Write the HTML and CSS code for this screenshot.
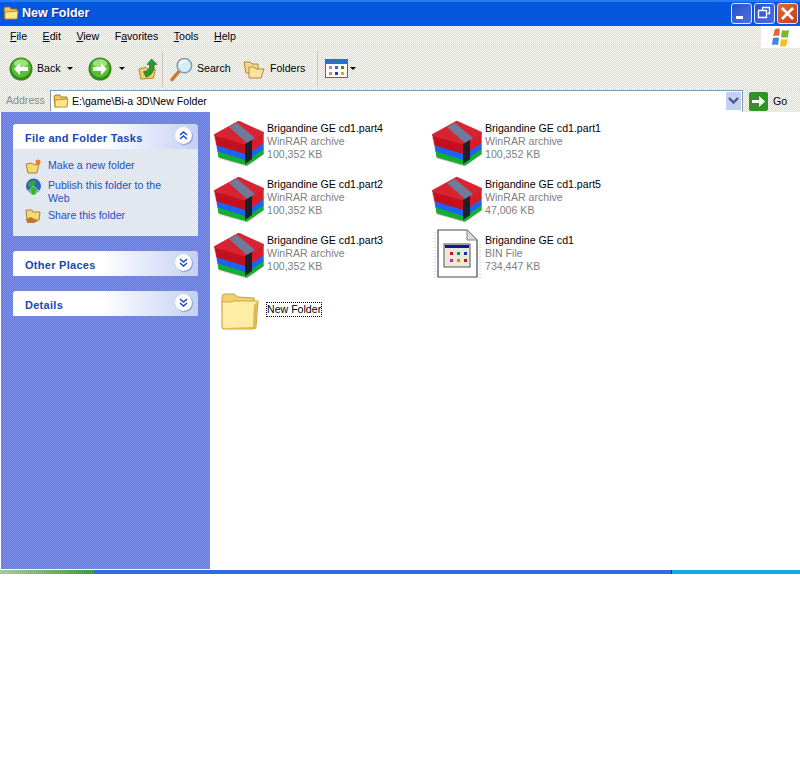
FILE: index.html
```html
<!DOCTYPE html>
<html lang="en">
<head>
<meta charset="utf-8">
<title>New Folder</title>
<link rel="stylesheet" href="styles.css">
</head>
<body>
<svg class="defs" width="0" height="0" aria-hidden="true">
  <defs>
    <symbol id="rar" viewBox="0 0 50 48">
      <path d="M0 15 L24 1 L50 12 L50 34 L33 46 L5 38 Z" fill="#e8b8bc" stroke="#d8a0a8" stroke-width="1" stroke-dasharray="1 1"/>
      <path d="M4 30 L33 39 L49 28 L49 34 L33 45 L5 37 Z" fill="#10b030" stroke="#10b030" stroke-linejoin="round"/>
      <path d="M3 24 L33 33 L49 22 L49 29 L33 40 L4 31 Z" fill="#1e62f2" stroke="#1e62f2" stroke-linejoin="round"/>
      <path d="M1 15 L33 24 L33 34 L3 25 Z" fill="#c4101e" stroke="#c4101e" stroke-linejoin="round"/>
      <path d="M33 24 L49 13 L49 23 L33 34 Z" fill="#d81c28" stroke="#d81c28" stroke-linejoin="round"/>
      <path d="M1 15 L25 2 L49 13 L33 24 Z" fill="#d82432" stroke="#d82432" stroke-width="2" stroke-linejoin="round"/>
      <path d="M15 7 L23 3 L41 18 L33 23 Z" fill="#6e7c9c"/>
      <path d="M31 24 L38 20 L38 39 L31 44 Z" fill="#1e2028"/>
    </symbol>
    <symbol id="bigfolder" viewBox="0 0 48 48">
      <path d="M7 9 Q7 6 10 6 L19 6 L23 9 L39 10 L40 35 L8 40 Z" fill="#f0d070" stroke="#c8a040"/>
      <path d="M7 14 L15 14 L18 13 L43 13 L41 38 Q41 41 38 41 L10 41 Q7 41 7 38 Z" fill="#feeda4" stroke="#d0a840" stroke-width="1.200"/>
      <path d="M11 40 L38 39 L39 17 L42 14 L41 39 Q40 41 38 41 L11 41 Z" fill="#e0b850"/>
    </symbol>
    <symbol id="tinyfolder" viewBox="0 0 16 16">
      <path d="M1 4 Q1 2 3 2 L7 2 L8 4 L14 4 L14 13 L2 14 Z" fill="#f0c656" stroke="#9a7418" stroke-width=".9"/>
      <path d="M2 7 L15 6 L14 14 L2 14 Z" fill="#fde68c" stroke="#b88c24" stroke-width=".9"/>
    </symbol>
    <symbol id="green" viewBox="0 0 24 24">
      <circle cx="12" cy="12" r="11.500" fill="#2e8f1c"/>
      <circle cx="12" cy="11" r="9.500" fill="#5cbc34"/>
      <ellipse cx="12" cy="6.500" rx="7" ry="4" fill="#a0e080"/>
    </symbol>
  </defs>
</svg>

<div class="window">
  <header class="titlebar">
    <svg class="title-icon" width="18" height="16"><use href="#tinyfolder"/></svg>
    <span class="title-text">New Folder</span>
    <div class="win-buttons">
      <div class="win-btn"><svg width="21" height="21" viewBox="0 0 21 21"><rect x="5" y="13" width="7" height="3" fill="#fff"/></svg></div>
      <div class="win-btn"><svg width="21" height="21" viewBox="0 0 21 21"><path d="M8.500 7.500V4.500H15.500V10.500H13.500M4.500 7.500H12.500V14.500H4.500Z" fill="none" stroke="#fff" stroke-width="1.300"/></svg></div>
      <div class="win-btn win-close"><svg width="21" height="21" viewBox="0 0 21 21"><path d="M5 5L16 16M16 5L5 16" stroke="#fff" stroke-width="2.600"/></svg></div>
    </div>
  </header>

  <nav class="menubar">
    <span class="menu-item"><u>F</u>ile</span>
    <span class="menu-item"><u>E</u>dit</span>
    <span class="menu-item"><u>V</u>iew</span>
    <span class="menu-item">F<u>a</u>vorites</span>
    <span class="menu-item"><u>T</u>ools</span>
    <span class="menu-item"><u>H</u>elp</span>
    <div class="flag">
      <svg width="20" height="20" viewBox="0 0 20 20">
        <path d="M4 2 Q7 1 9 2 L8 9 Q6 8 2 9 Z" fill="#e8662c"/>
        <path d="M11 3 Q14 4 18 3 L17 10 Q13 11 10 10 Z" fill="#7cb82e"/>
        <path d="M2 11 Q6 10 8 11 L7 18 Q4 17 1 18 Z" fill="#3c86dc"/>
        <path d="M10 12 Q13 13 17 12 L15 19 Q12 20 9 19 Z" fill="#f4c01c"/>
      </svg>
    </div>
  </nav>

  <div class="toolbar">
    <div class="tool">
      <svg width="24" height="24"><use href="#green"/><path d="M5 12L11 6V10H19V14H11V18Z" fill="#fff"/></svg>
      <span class="tool-label label-back">Back</span>
      <span class="caret caret-back"></span>
    </div>
    <div class="tool tool-fwd">
      <svg width="24" height="24"><use href="#green"/><path d="M19 12L13 6V10H5V14H13V18Z" fill="#fff"/></svg>
      <span class="caret caret-fwd"></span>
    </div>
    <svg class="up-icon" width="20" height="24" viewBox="0 0 22 24">
      <path d="M1 12L9 10L12 13L19 12L17 22L3 23Z" fill="#f3cf6b" stroke="#a87f22"/>
      <path d="M6 15Q13 14 13 7H10L15 1L21 7H18Q18 18 9 21Z" fill="#2b9a2a" stroke="#176c18" stroke-width=".7"/>
    </svg>
    <span class="sep"></span>
    <div class="tool tool-search">
      <svg width="25" height="26" viewBox="0 0 26 26">
        <path d="M3 24L11 15" stroke="#c9792c" stroke-width="3.400" stroke-linecap="round"/>
        <circle cx="16" cy="9.500" r="7.500" fill="#d6eefa" stroke="#7f9bb8" stroke-width="1.600"/>
        <path d="M11 8Q13 4.500 18 4.500" stroke="#fff" stroke-width="2" fill="none"/>
      </svg>
      <span class="tool-label label-search">Search</span>
    </div>
    <div class="tool tool-folders">
      <svg width="23" height="20" viewBox="0 0 23 20">
        <path d="M1 3H7L9 5H15V14H3Z" fill="#f3d98a" stroke="#b18a30"/>
        <path d="M6 8H11L13 10H21L18 19H6Z" fill="#fbe49a" stroke="#b18a30"/>
      </svg>
      <span class="tool-label label-folders">Folders</span>
    </div>
    <span class="sep sep-views"></span>
    <div class="tool">
      <svg width="23" height="20" viewBox="0 0 23 20">
        <rect x=".5" y=".5" width="22" height="18" fill="#fff" stroke="#2a70c8"/>
        <rect x="1" y="1" width="21" height="4" fill="#2a70c8"/>
        <rect x="4" y="7" width="3" height="3" fill="#8a94d8"/><rect x="10" y="7" width="3" height="3" fill="#3d62c2"/><rect x="16" y="7" width="3" height="3" fill="#1c9a40"/>
        <rect x="4" y="13" width="3" height="3" fill="#e8824a"/><rect x="10" y="13" width="3" height="3" fill="#1d4aa8"/><rect x="16" y="13" width="3" height="3" fill="#e0a62c"/>
      </svg>
      <span class="caret caret-views"></span>
    </div>
  </div>

  <div class="addressbar">
    <span class="address-label">Address</span>
    <div class="address-field">
      <svg width="16" height="16"><use href="#tinyfolder"/></svg>
      <span class="address-text">E:\game\Bi-a 3D\New Folder</span>
      <span class="address-drop"><svg width="11" height="8" viewBox="0 0 11 8"><path d="M1 1L5.500 5.500L10 1" fill="none" stroke="#4d5a80" stroke-width="2.400"/></svg></span>
    </div>
    <div class="go">
      <svg width="19" height="19" viewBox="0 0 19 19">
        <rect width="19" height="19" rx="2" fill="#2f9425"/>
        <path d="M3 8H10V4L16 9.500L10 15V11H3Z" fill="#fff"/>
      </svg>
      <span class="go-label">Go</span>
    </div>
  </div>

  <main class="content">
    <aside class="sidebar">
      <section class="panel">
        <div class="panel-head">
          <span>File and Folder Tasks</span>
          <span class="chev"><svg width="11" height="11" viewBox="0 0 11 11"><path d="M2 5L5.500 2L9 5M2 9L5.500 6L9 9" fill="none" stroke="#1f46b8" stroke-width="1.500"/></svg></span>
        </div>
        <div class="panel-body">
          <a class="task">
            <svg width="17" height="16" viewBox="0 0 17 16"><path d="M1 6L7 5L9 7L14 6L12 15H3Z" fill="#f6d878" stroke="#a58232"/><circle cx="13" cy="4" r="2.500" fill="#ef7c2a"/></svg>
            <span>Make a new folder</span>
          </a>
          <a class="task">
            <svg width="17" height="18" viewBox="0 0 17 18"><circle cx="8.500" cy="8" r="7.500" fill="#2d62c8"/><path d="M3 5Q8 1 11 3L9 9L4 9Z" fill="#3aa23a"/><path d="M8.500 8L14 13H11V17H6V13H3Z" fill="#2fb52a" stroke="#fff" stroke-width=".5"/></svg>
            <span>Publish this folder to the Web</span>
          </a>
          <a class="task">
            <svg width="17" height="16" viewBox="0 0 17 16"><path d="M1 2H7L8 4H15L14 12H2Z" fill="#f6d878" stroke="#a58232"/><path d="M1 11L6 9L13 13L9 15H2Z" fill="#c4762c"/></svg>
            <span>Share this folder</span>
          </a>
        </div>
      </section>
      <section class="panel">
        <div class="panel-head">
          <span>Other Places</span>
          <span class="chev"><svg width="11" height="11" viewBox="0 0 11 11"><path d="M2 2L5.500 5L9 2M2 6L5.500 9L9 6" fill="none" stroke="#1f46b8" stroke-width="1.500"/></svg></span>
        </div>
      </section>
      <section class="panel">
        <div class="panel-head">
          <span>Details</span>
          <span class="chev"><svg width="11" height="11" viewBox="0 0 11 11"><path d="M2 2L5.500 5L9 2M2 6L5.500 9L9 6" fill="none" stroke="#1f46b8" stroke-width="1.500"/></svg></span>
        </div>
      </section>
    </aside>

    <section class="files">
      <div class="file">
        <svg class="file-icon" width="50" height="48"><use href="#rar"/></svg>
        <div class="file-text"><span class="file-name">Brigandine GE cd1.part4</span><span class="file-meta">WinRAR archive</span><span class="file-meta">100,352 KB</span></div>
      </div>
      <div class="file">
        <svg class="file-icon" width="50" height="48"><use href="#rar"/></svg>
        <div class="file-text"><span class="file-name">Brigandine GE cd1.part1</span><span class="file-meta">WinRAR archive</span><span class="file-meta">100,352 KB</span></div>
      </div>
      <div class="file">
        <svg class="file-icon" width="50" height="48"><use href="#rar"/></svg>
        <div class="file-text"><span class="file-name">Brigandine GE cd1.part2</span><span class="file-meta">WinRAR archive</span><span class="file-meta">100,352 KB</span></div>
      </div>
      <div class="file">
        <svg class="file-icon" width="50" height="48"><use href="#rar"/></svg>
        <div class="file-text"><span class="file-name">Brigandine GE cd1.part5</span><span class="file-meta">WinRAR archive</span><span class="file-meta">47,006 KB</span></div>
      </div>
      <div class="file">
        <svg class="file-icon" width="50" height="48"><use href="#rar"/></svg>
        <div class="file-text"><span class="file-name">Brigandine GE cd1.part3</span><span class="file-meta">WinRAR archive</span><span class="file-meta">100,352 KB</span></div>
      </div>
      <div class="file">
        <svg class="file-icon icon-bin" width="50" height="48" viewBox="0 0 50 48">
          <path d="M3 0V46M48 12V46" stroke="#b8b8b8" stroke-dasharray="1 2"/>
          <path d="M6 -2H35L45 8V45H6Z" fill="#fff" stroke="#44484c" stroke-width="1.200"/>
          <path d="M35 -2V8H45Z" fill="#dcdcd4" stroke="#80848a"/>
          <rect x="12" y="12" width="26" height="23" fill="#ece8d8" stroke="#505458"/>
          <rect x="13" y="13" width="24" height="3" fill="#101a8c"/>
          <rect x="18" y="20" width="3" height="3" fill="#c8102a"/><rect x="25" y="20" width="3" height="3" fill="#10908c"/><rect x="32" y="20" width="3" height="3" fill="#1030b8"/>
          <rect x="18" y="27" width="3" height="3" fill="#c02aa8"/><rect x="25" y="27" width="3" height="3" fill="#a89a14"/><rect x="32" y="27" width="3" height="3" fill="#c8102a"/>
        </svg>
        <div class="file-text"><span class="file-name">Brigandine GE cd1</span><span class="file-meta">BIN File</span><span class="file-meta">734,447 KB</span></div>
      </div>
      <div class="file">
        <svg class="file-icon" width="50" height="48"><use href="#bigfolder"/></svg>
        <div class="file-text file-text-folder"><span class="file-name file-selected">New Folder</span></div>
      </div>
    </section>
  </main>

  <footer class="taskbar">
    <span class="task-start"></span>
    <span class="task-mid"></span>
    <span class="task-tray"></span>
  </footer>
</div>
</body>
</html>
```

FILE: styles.css
```css
* { box-sizing: border-box; }
html, body { margin: 0; padding: 0; background: #fff; }
body { font: 10.6px/13px "Liberation Sans", Arial, sans-serif; color: #000; }
.defs { position: absolute; }
.window { width: 800px; height: 574px; display: flex; flex-direction: column; overflow: hidden; }

.titlebar {
  height: 26px; display: flex; align-items: center; padding-left: 2px;
  background: repeating-conic-gradient(#0a4cd4 0 25%, #0a5ce6 0 50%) 0 0 / 2px 2px;
  box-shadow: inset 0 -2px 0 #0058f0, inset 0 2px 0 #2a7cf0;
}
.title-icon { margin-right: 2px; flex: none; }
.title-text { color: #fff; font-size: 12.5px; font-weight: 700; text-shadow: 1px 1px #0a2a90; }
.win-buttons { margin-left: auto; display: flex; gap: 2px; padding-right: 2px; }
.win-btn {
  width: 21px; height: 21px; border: 1px solid #dfe8ff; border-radius: 3px;
  background: linear-gradient(135deg, #2a50c8, #4a70e0); display: flex; align-items: center; justify-content: center;
}
.win-btn svg { margin: -1px; flex: none; }
.win-close { background: linear-gradient(135deg, #e06a3c, #c83c18); }

.menubar, .toolbar, .addressbar {
  background: repeating-conic-gradient(#e6d9c0 0 25%, #fdfbf6 0 50%) 0 0 / 2px 2px;
}
.menubar {
  height: 22px; display: flex; align-items: center; gap: 15.500px; padding-left: 10px;
  border-bottom: 1px solid #efe4d6;
}
.flag {
  margin-left: auto; width: 39px; height: 22px; background: #fff; flex: none;
  display: flex; align-items: center; justify-content: center;
}
.toolbar {
  height: 42px; display: flex; align-items: center; padding-left: 9px;
  border-bottom: 1px solid #efe4d6;
}
.tool { display: flex; align-items: center; }
.tool-label { margin-left: 4px; }
.label-back { width: 24px; }
.label-search { width: 36px; margin-left: 3px; }
.label-folders { width: 38px; }
.caret { display: inline-block; border-left: 3px solid transparent; border-right: 3px solid transparent; border-top: 3px solid #000; }
.caret-back { margin-left: 6px; }
.tool-fwd { margin-left: 15px; }
.caret-fwd { margin-left: 7px; }
.up-icon { margin-left: 13px; flex: none; }
.sep { width: 1px; height: 36px; background: #cfc9b8; margin: 0 6px 0 4px; flex: none; }
.tool-folders { margin-left: 10px; }
.sep-views { margin: 0 7px 0 9px; }
.caret-views { margin-left: 2px; }

.addressbar { height: 22px; display: flex; align-items: stretch; }
.address-label { width: 50px; padding: 4px 0 0 6px; color: #8a8a80; }
.address-field {
  width: 693px; display: flex; align-items: center; gap: 3px; padding-left: 2px;
  background: #fff; border: 1px solid #7f9db9; border-bottom-color: #fff;
}
.address-field svg { flex: none; }
.address-drop {
  margin-left: auto; margin-right: 1px; width: 15px; height: 18px; background: #c2d0f4; flex: none;
  display: flex; align-items: center; justify-content: center;
}
.go { flex: 1; display: flex; align-items: center; gap: 5px; padding-left: 6px; }

.content { flex: 1; min-height: 0; display: flex; background: #fff; }
.sidebar {
  width: 209px; margin-left: 1px; height: 457px; padding: 12px 12px 0 12px; flex: none;
  display: flex; flex-direction: column; gap: 15px;
  background: repeating-conic-gradient(#7f92ea 0 25%, #6678d8 0 50%) 0 0 / 2px 2px;
}
.panel { width: 185px; }
.panel-head {
  height: 25px; display: flex; align-items: center; justify-content: space-between;
  padding: 3px 6px 0 12px; font-size: 11px; font-weight: 700; letter-spacing: .28px; color: #1a46b0; border-radius: 3px 3px 0 0;
  background: linear-gradient(90deg, #fff 0, #fff 48%, #c4d0f4 100%);
}
.chev {
  width: 17px; height: 17px; margin-top: -6px; border-radius: 50%; background: #fff; flex: none;
  display: flex; align-items: center; justify-content: center; box-shadow: 1px 1px 1px #8898d8;
}
.panel-body {
  height: 87px; padding: 10px 6px 0 12px; display: flex; flex-direction: column; gap: 4px;
  background: repeating-conic-gradient(#d6def6 0 25%, #eef1fc 0 50%) 0 0 / 2px 2px;
}
.task { display: flex; gap: 6px; min-height: 16px; color: #2150c0; }
.task svg { flex: none; margin-top: -1px; }
.task span { max-width: 125px; }

.files {
  flex: 1; height: 457px; padding: 8px 0 0 4px;
  display: grid; grid-template-columns: 218px 218px; grid-auto-rows: 56px; align-content: start;
}
.file { display: flex; align-items: flex-start; }
.file-icon { flex: none; overflow: visible; }
.file-text { margin-left: 3px; display: flex; flex-direction: column; padding-top: 2px; }
.file-name { color: #000; white-space: nowrap; }
.file-meta { color: #808080; white-space: nowrap; }
.file-text-folder { padding-top: 15px; align-items: flex-start; }
.file-selected { outline: 1px dotted #000; }

.taskbar { height: 4px; margin-top: 1px; flex: none; display: flex; }
.task-start { width: 94px; background: linear-gradient(90deg, #a8c8a0, #3f9c3c); }
.task-mid { flex: 1; background: #2f6ce0; }
.task-tray { width: 129px; background: #12a8ee; border-left: 1px solid #0a2a80; }
```
